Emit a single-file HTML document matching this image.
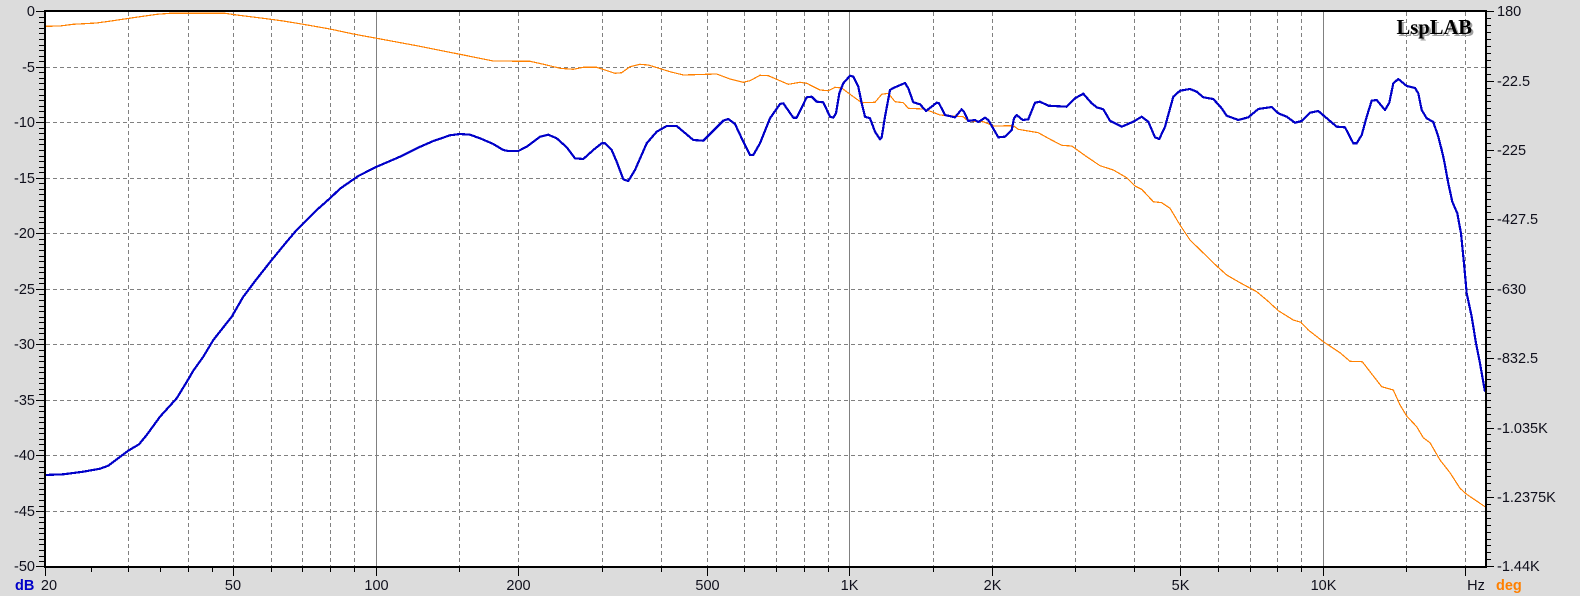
<!DOCTYPE html>
<html>
<head>
<meta charset="utf-8">
<title>LspLAB</title>
<style>
html,body{margin:0;padding:0;background:#dcdcdc;width:1580px;height:596px;overflow:hidden}
svg{display:block}
text{font-family:"Liberation Sans",Arial,sans-serif;font-size:14.5px;fill:#10101c}
.b{font-weight:bold}
</style>
</head>
<body>
<svg width="1580" height="596" viewBox="0 0 1580 596" xmlns="http://www.w3.org/2000/svg">
<rect x="0" y="0" width="1580" height="596" fill="#dcdcdc"/>
<rect x="45" y="11" width="1441" height="556" fill="#ffffff"/>

<!-- horizontal dashed grid -->
<path shape-rendering="crispEdges" stroke="#808080" stroke-width="1" stroke-dasharray="4 3" fill="none" d="M46 67.5H1485M46 122.5H1485M46 178.5H1485M46 233.5H1485M46 289.5H1485M46 344.5H1485M46 400.5H1485M46 455.5H1485M46 511.5H1485"/>
<!-- vertical dashed grid -->
<path shape-rendering="crispEdges" stroke="#808080" stroke-width="1" stroke-dasharray="4 3" fill="none" d="M128.5 12V566M188.5 12V566M233.5 12V566M271.5 12V566M302.5 12V566M330.5 12V566M354.5 12V566M459.5 12V566M518.5 12V566M602.5 12V566M661.5 12V566M707.5 12V566M744.5 12V566M776.5 12V566M804.5 12V566M828.5 12V566M933.5 12V566M992.5 12V566M1075.5 12V566M1134.5 12V566M1180.5 12V566M1218.5 12V566M1250.5 12V566M1277.5 12V566M1301.5 12V566M1406.5 12V566M1465.5 12V566"/>
<!-- decade lines -->
<path shape-rendering="crispEdges" stroke="#808080" stroke-width="1" fill="none" d="M376.5 12V566M849.5 12V566M1323.5 12V566"/>

<!-- phase curve -->
<polyline shape-rendering="crispEdges" fill="none" stroke="#ff8000" stroke-width="1.2" stroke-linejoin="round" points="45,26.3 60,26 73,24.3 96.7,23 113,20.7 133.3,17.7 156.7,14.3 170,13.3 225,13.3 236.7,15 263.3,18.3 283.3,21 303.3,24.3 330,29 353.3,34 376.7,38.3 416.7,45.7 460,54.3 493.3,61 530,61.3 546.7,65 560,68.3 573.3,69.3 583.3,67.3 596.7,67.3 615,73.3 621.7,72.7 630,66.7 640,64.3 648.3,65 670,71.7 683.3,75 716.7,74 730,79 743.3,82.3 750,80.7 760,75.3 768.3,75.7 788.3,84.3 800,82.3 806.7,83.3 820,90 828.3,90.7 835,87.3 841.7,88 850,94.3 861.7,102.7 875,102.3 881.7,94.3 888.3,93.3 895,101.7 903.3,102.7 908.3,108.3 923.3,109 931.7,111.7 940,115 963.3,116.7 968,121 983,121.7 994,126 1013.3,125.7 1018.3,129.3 1038.3,132.7 1048.3,138.3 1061.7,145.3 1071.7,146 1086.7,156.7 1100,165.7 1113.3,170 1126.7,177.7 1135,186 1141.7,189.3 1153.3,201.7 1161.7,202.7 1170,208.3 1180,225 1190,240 1216.7,266 1226.7,275 1240,282.7 1256.7,291.7 1266.7,300 1278.3,310.7 1293.3,320 1301,322.3 1308.3,330 1323.3,341.7 1340,352.7 1350,361.3 1362.3,361.7 1370,371.7 1381.7,386.7 1393.3,390 1400,405 1406.7,416 1416.7,426.7 1423.3,437.7 1430,442.7 1440,460 1450,472.7 1460,488.3 1466.7,494.3 1485,506.7"/>

<!-- magnitude curve -->
<polyline shape-rendering="crispEdges" fill="none" stroke="#0000c8" stroke-width="2.2" stroke-linejoin="round" points="45,475 63.3,474.3 83.3,471.7 100,468.7 108.3,465.7 128.3,450.7 139,444.3 146.7,435 160,416.7 176.7,398.3 188.3,379.3 193.3,370.7 203.3,356.7 213.3,340 231.7,316.7 243.3,296.7 256.7,279 271.7,260 286.7,241.7 296.7,230 316.7,210 330,198.3 340,188.7 358.3,176 376.7,166.7 400,156.7 416.7,148.3 433.3,141 450,135.3 460,134 470,134.7 480,138.3 493.3,144 503.3,150 508,151 518.3,151 526.7,146.7 540,136.7 548.3,134.7 556.7,138.3 566.7,147.3 575,158.3 583.3,159 593.3,150 601.7,143.3 605,143.3 611.7,150 616.7,161.7 623.3,179.3 628.3,181 635,170 646.7,143.3 656.7,131.7 666.7,126 676.7,126 693.3,140 703.3,140.7 723.3,120.7 728.3,119 735,124 743.3,141.7 750,155 753.3,155 760,143.3 770,118.3 780,104 783.3,103.3 793.3,117.7 796.7,117.7 806.7,97.3 811.7,96.7 816.7,101.7 823.3,102.3 830,116.7 833.3,117.7 836,113.3 839.3,93.3 843.3,83.3 850,75.7 853.3,76.7 858.3,86.7 861.7,103.3 865,116.7 870,118.3 875,131.7 880,139.3 881.7,137.3 885,116.7 890,90 893.3,88 905,83 908.3,88.3 913.3,102.3 920,104.3 926,111 936.7,102.7 939,103.3 945,115 955,117.3 961.7,109.3 964,111.7 968.3,121 975,120 978.3,122 985,117.7 988.3,120 998.3,137.3 1005,136.7 1011.7,130 1014,118.3 1016.7,115 1022.7,120 1028.3,119.3 1035,102.7 1040,101.7 1048.3,105.7 1066.7,106.7 1075,98.3 1083.3,93.7 1091.7,103.3 1096.7,107.3 1103.3,109.3 1110,120.7 1121.7,126.7 1133.3,121.7 1141.7,116.7 1148.3,121.7 1155,137.3 1159.3,139 1165,126.7 1173.3,96.7 1180,90.7 1190,89 1196.7,91.7 1203.3,97.3 1213.3,99 1221.7,108.3 1226.7,115.7 1238.3,120 1248.3,117.3 1258.3,109 1271.7,107 1278.3,113.3 1286.7,116.7 1295,122.7 1301.7,121 1310,112.7 1318.3,111 1330,121 1336.7,126.7 1345,127.3 1353.3,143.3 1356.7,143.3 1361.7,135 1366.7,116.7 1371.7,100.7 1376.7,100 1385,110 1389.3,102.7 1393.3,83.3 1398.3,79 1406.7,86 1415,88 1418.3,93.3 1421.7,110 1426.7,118.3 1433.3,122 1438.3,136.7 1441.7,150 1444,160 1448.3,183.3 1452.3,201.7 1457.3,213.3 1461,233.3 1464,263.3 1466.7,293.3 1471.7,316.7 1476,343.3 1480,363.3 1485,391.7"/>

<!-- frame -->
<rect x="45" y="11" width="1441" height="556" fill="none" stroke="#000" stroke-width="2" shape-rendering="crispEdges"/>

<!-- left ticks -->
<path shape-rendering="crispEdges" stroke="#000" stroke-width="1" fill="none" d="M39 17.5h5M39 22.5h5M39 28.5h5M39 33.5h5M39 39.5h5M39 45.5h5M39 50.5h5M39 56.5h5M39 61.5h5M39 72.5h5M39 78.5h5M39 83.5h5M39 89.5h5M39 95.5h5M39 100.5h5M39 106.5h5M39 111.5h5M39 117.5h5M39 128.5h5M39 133.5h5M39 139.5h5M39 144.5h5M39 150.5h5M39 156.5h5M39 161.5h5M39 167.5h5M39 172.5h5M39 183.5h5M39 189.5h5M39 194.5h5M39 200.5h5M39 206.5h5M39 211.5h5M39 217.5h5M39 222.5h5M39 228.5h5M39 239.5h5M39 244.5h5M39 250.5h5M39 256.5h5M39 261.5h5M39 267.5h5M39 272.5h5M39 278.5h5M39 283.5h5M39 294.5h5M39 300.5h5M39 306.5h5M39 311.5h5M39 317.5h5M39 322.5h5M39 328.5h5M39 333.5h5M39 339.5h5M39 350.5h5M39 356.5h5M39 361.5h5M39 367.5h5M39 372.5h5M39 378.5h5M39 383.5h5M39 389.5h5M39 394.5h5M39 406.5h5M39 411.5h5M39 417.5h5M39 422.5h5M39 428.5h5M39 433.5h5M39 439.5h5M39 444.5h5M39 450.5h5M39 461.5h5M39 467.5h5M39 472.5h5M39 478.5h5M39 483.5h5M39 489.5h5M39 494.5h5M39 500.5h5M39 506.5h5M39 517.5h5M39 522.5h5M39 528.5h5M39 533.5h5M39 539.5h5M39 544.5h5M39 550.5h5M39 556.5h5M39 561.5h5M36 11.5h8M36 67.5h8M36 122.5h8M36 178.5h8M36 233.5h8M36 289.5h8M36 344.5h8M36 400.5h8M36 455.5h8M36 511.5h8M36 566.5h8"/>

<!-- right ticks -->
<path shape-rendering="crispEdges" stroke="#000" stroke-width="1" fill="none" d="M1487 18.5h4M1487 25.5h4M1487 32.5h4M1487 39.5h4M1487 46.5h4M1487 53.5h4M1487 60.5h4M1487 67.5h4M1487 74.5h4M1487 88.5h4M1487 95.5h4M1487 101.5h4M1487 108.5h4M1487 115.5h4M1487 122.5h4M1487 129.5h4M1487 136.5h4M1487 143.5h4M1487 157.5h4M1487 164.5h4M1487 171.5h4M1487 178.5h4M1487 185.5h4M1487 192.5h4M1487 199.5h4M1487 206.5h4M1487 212.5h4M1487 226.5h4M1487 233.5h4M1487 240.5h4M1487 247.5h4M1487 254.5h4M1487 261.5h4M1487 268.5h4M1487 275.5h4M1487 282.5h4M1487 296.5h4M1487 303.5h4M1487 310.5h4M1487 317.5h4M1487 323.5h4M1487 330.5h4M1487 337.5h4M1487 344.5h4M1487 351.5h4M1487 365.5h4M1487 372.5h4M1487 379.5h4M1487 386.5h4M1487 393.5h4M1487 400.5h4M1487 407.5h4M1487 414.5h4M1487 421.5h4M1487 434.5h4M1487 441.5h4M1487 448.5h4M1487 455.5h4M1487 462.5h4M1487 469.5h4M1487 476.5h4M1487 483.5h4M1487 490.5h4M1487 504.5h4M1487 511.5h4M1487 518.5h4M1487 525.5h4M1487 532.5h4M1487 539.5h4M1487 545.5h4M1487 552.5h4M1487 559.5h4M1487 11.5h7M1487 81.5h7M1487 150.5h7M1487 219.5h7M1487 289.5h7M1487 358.5h7M1487 428.5h7M1487 497.5h7M1487 566.5h7"/>

<!-- bottom ticks -->
<path shape-rendering="crispEdges" stroke="#000" stroke-width="1" fill="none" d="M91.5 568v4M128.5 568v4M160.5 568v4M188.5 568v4M212.5 568v4M271.5 568v4M302.5 568v4M330.5 568v4M354.5 568v4M459.5 568v4M602.5 568v4M661.5 568v4M744.5 568v4M776.5 568v4M804.5 568v4M828.5 568v4M933.5 568v4M1075.5 568v4M1134.5 568v4M1218.5 568v4M1250.5 568v4M1277.5 568v4M1301.5 568v4M1406.5 568v4M45.5 568v8M233.5 568v8M376.5 568v8M518.5 568v8M707.5 568v8M849.5 568v8M992.5 568v8M1180.5 568v8M1323.5 568v8M1465.5 568v8"/>

<!-- left labels -->
<g text-anchor="end">
<text x="35" y="16">0</text>
<text x="35" y="72">-5</text>
<text x="35" y="127">-10</text>
<text x="35" y="183">-15</text>
<text x="35" y="238">-20</text>
<text x="35" y="294">-25</text>
<text x="35" y="349">-30</text>
<text x="35" y="405">-35</text>
<text x="35" y="460">-40</text>
<text x="35" y="516">-45</text>
<text x="35" y="571">-50</text>
</g>

<!-- right labels -->
<g>
<text x="1497" y="16">180</text>
<text x="1497" y="86">-22.5</text>
<text x="1497" y="155">-225</text>
<text x="1497" y="224">-427.5</text>
<text x="1497" y="294">-630</text>
<text x="1497" y="363">-832.5</text>
<text x="1497" y="433">-1.035K</text>
<text x="1497" y="502">-1.2375K</text>
<text x="1497" y="571">-1.44K</text>
</g>

<!-- bottom labels -->
<g text-anchor="middle">
<text x="49" y="590">20</text>
<text x="233" y="590">50</text>
<text x="376.5" y="590">100</text>
<text x="518.5" y="590">200</text>
<text x="707.5" y="590">500</text>
<text x="849.5" y="590">1K</text>
<text x="992.5" y="590">2K</text>
<text x="1180.5" y="590">5K</text>
<text x="1323.5" y="590">10K</text>
<text x="1476" y="590">Hz</text>
</g>
<text x="15" y="590" class="b" style="fill:#0000c8">dB</text>
<text x="1496" y="590" class="b" style="fill:#ff8000">deg</text>

<!-- logo -->
<text x="1398.5" y="36" style="font-family:'Liberation Serif',serif;font-weight:bold;font-size:20.6px;fill:#a0a0a0">LspLAB</text>
<text x="1396.5" y="34" style="font-family:'Liberation Serif',serif;font-weight:bold;font-size:20.6px;fill:#000">LspLAB</text>
</svg>
</body>
</html>
